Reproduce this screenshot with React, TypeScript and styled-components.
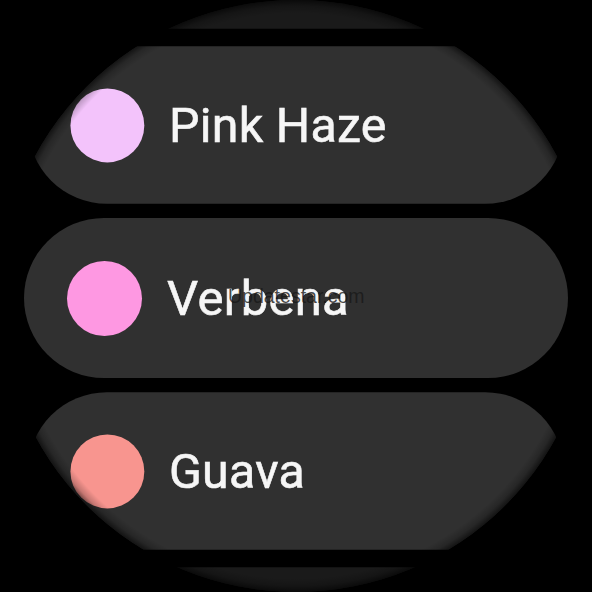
import { createGlobalStyle } from "styled-components";
import styled from "styled-components";

const GlobalStyle = createGlobalStyle`
    html, body {
        margin: 0;
        padding: 0;
        background: #000;
    }
    body {
        font-family: Roboto, "Noto Sans", "Liberation Sans", sans-serif;
    }
`;

// round watch screen
const Screen = styled.div`
    position: relative;
    width: 592px;
    height: 592px;
    border-radius: 50%;
    overflow: hidden;
    background: #000;
`;

const ChipList = styled.div`
    display: flex;
    flex-direction: column;
    gap: 13px;
    margin-top: -128px;
    padding: 0 24px;
`;

// items away from the centre shrink and dim, like a scaling list on a watch
const Chip = styled.button<{ $scale: number; $dim?: boolean }>`
    display: flex;
    align-items: center;
    gap: 25px;
    height: 160px;
    padding: 0 43px;
    border: none;
    border-radius: 80px;
    background: #303030;
    flex-shrink: 0;
    cursor: pointer;
    transform: scale(${(p) => p.$scale});
    opacity: ${(p) => (p.$dim ? 0.55 : 1)};
`;

const Swatch = styled.span<{ $color: string }>`
    width: 75px;
    height: 75px;
    border-radius: 50%;
    background: ${(p) => p.$color};
    flex-shrink: 0;
`;

const Label = styled.span`
    font-family: Roboto, "Noto Sans", sans-serif;
    font-size: 49px;
    font-weight: 400;
    color: #f6f6f6;
    letter-spacing: 0.3px;
    -webkit-text-stroke: 0.6px #f6f6f6;
`;

// soft edge of the curved display
const Vignette = styled.div`
    position: absolute;
    inset: 0;
    pointer-events: none;
    background: radial-gradient(
        circle closest-side at 50% 50%,
        rgba(0, 0, 0, 0) 95.5%,
        rgba(0, 0, 0, 0.2) 98%,
        rgba(0, 0, 0, 0.6) 100%
    );
`;

const Watermark = styled.div`
    position: absolute;
    left: 228px;
    top: 285px;
    font-family: "Liberation Sans", Arial, sans-serif;
    font-size: 19.5px;
    color: rgba(24, 24, 24, 0.8);
    pointer-events: none;
`;

const colors = [
    { name: "Lavender", color: "#d7c4fb", scale: 0.96, dim: true },
    { name: "Pink Haze", color: "#f3c3fb", scale: 0.985 },
    { name: "Verbena", color: "#fe98e2", scale: 1 },
    { name: "Guava", color: "#f8958f", scale: 0.985 },
    { name: "Peach", color: "#fbbf9a", scale: 0.96, dim: true },
];

const App = () => {
    return (
        <>
            <GlobalStyle />
            <Screen>
                <ChipList>
                    {colors.map((c) => (
                        <Chip key={c.name} $scale={c.scale} $dim={c.dim}>
                            <Swatch $color={c.color} />
                            <Label>{c.name}</Label>
                        </Chip>
                    ))}
                </ChipList>
                <Vignette />
                <Watermark>Updatestar.com</Watermark>
            </Screen>
        </>
    );
};

export default App;
